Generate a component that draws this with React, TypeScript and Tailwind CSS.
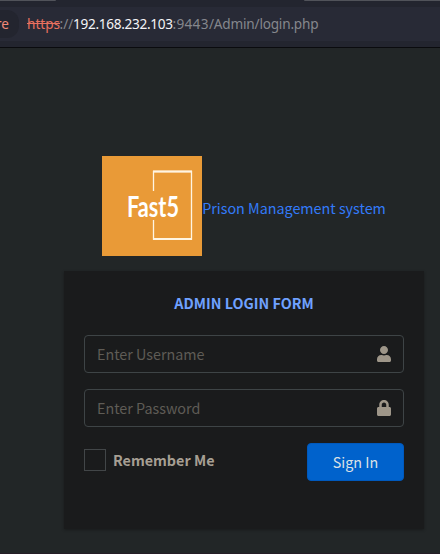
import React from "react";
import { FaUser, FaLock } from "react-icons/fa";

function AddressBar() {
  return (
    <header className="flex h-12 flex-col border-b border-[#0a0b0e] bg-[#23252f]">
      <div className="flex h-[7px] items-start justify-between">
        <div className="h-px w-[56px] rounded-br-sm bg-[#51535a]" />
        <div className="h-px w-[136px] rounded-bl-sm bg-[#51535a]" />
      </div>
      <div className="flex h-[34px] items-center bg-[#282a36] font-['Noto_Sans',sans-serif] text-[13.6px] whitespace-pre">
        <div className="flex h-[28px] w-[19px] items-center justify-end rounded-r-xl bg-[#23252f] pr-[10px] text-[#f08878]">
          <span>re</span>
        </div>
        <div className="-mt-px ml-2 flex text-[#85878d]">
          <span className="w-[32.5px] text-[#e8705f] line-through">https</span>
          <span className="w-[13.5px]">://</span>
          <span className="w-[99.5px] tracking-[-0.3px] text-[#f4f4f6]">192.168.232.103</span>
          <span className="w-[36.5px] tracking-[0.3px]">:9443</span>
          <span className="tracking-[-0.2px]">/Admin/login.php</span>
        </div>
      </div>
    </header>
  );
}

function Logo() {
  return (
    <svg viewBox="0 0 100 100" className="size-[100px] shrink-0 bg-[#e99a37]" aria-label="Fast5">
      <path d="M51.5 35V15.5H89.5V83H51.5V64" fill="none" stroke="#fff5e3" strokeWidth="1.3" />
      <path d="M51 15.5H90M51 83H90" stroke="#fff5e3" strokeWidth="2" />
      <text
        x="25"
        y="60.5"
        textLength="52"
        lengthAdjust="spacingAndGlyphs"
        fill="#fff"
        className="font-['Lato',sans-serif] text-[29px] font-bold"
      >
        Fast5
      </text>
    </svg>
  );
}

function Field({ placeholder, type, icon }: { placeholder: string; type: string; icon: React.ReactNode }) {
  return (
    <div className="mb-4 flex h-[38px] items-center rounded border border-[#3e4446]">
      <input
        type={type}
        placeholder={placeholder}
        className="min-w-0 flex-1 bg-transparent pl-3 outline-none placeholder:text-[#5f5c56]"
      />
      <span className="flex w-[38px] justify-center text-[#9e9689]">{icon}</span>
    </div>
  );
}

export default function App() {
  return (
    <div className="h-[554px] w-[440px] overflow-hidden border-b border-[#251d26] bg-[#222627] font-['Noto_Sans_CJK_SC',sans-serif] text-[14.33px] leading-6">
      <AddressBar />
      <main className="ml-16 w-[360px] pt-[108px]">
        <div className="flex items-center justify-center pb-[15px]">
          <Logo />
          <a className="mt-[4px] whitespace-nowrap text-[#337bfa]">Prison Management system</a>
        </div>
        <section className="h-[258px] bg-[#1a1b1c] px-5 pt-5 shadow-[0_1px_3px_rgba(0,0,0,0.3)]">
          <p className="mb-5 text-center font-bold text-[#6fa1ff]">ADMIN LOGIN FORM</p>
          <Field type="text" placeholder="Enter Username" icon={<FaUser size={16} />} />
          <Field type="password" placeholder="Enter Password" icon={<FaLock size={16} />} />
          <div className="flex items-start justify-between">
            <label className="flex h-[34px] items-center font-bold text-[#a69f93]">
              <span className="mr-[7px] size-[22px] border border-[#424648]" />
              Remember Me
            </label>
            <button className="h-[38px] w-[97px] rounded border border-[#0059bd] bg-[#0062cc] text-[#dce1e6]">
              Sign In
            </button>
          </div>
        </section>
      </main>
    </div>
  );
}
